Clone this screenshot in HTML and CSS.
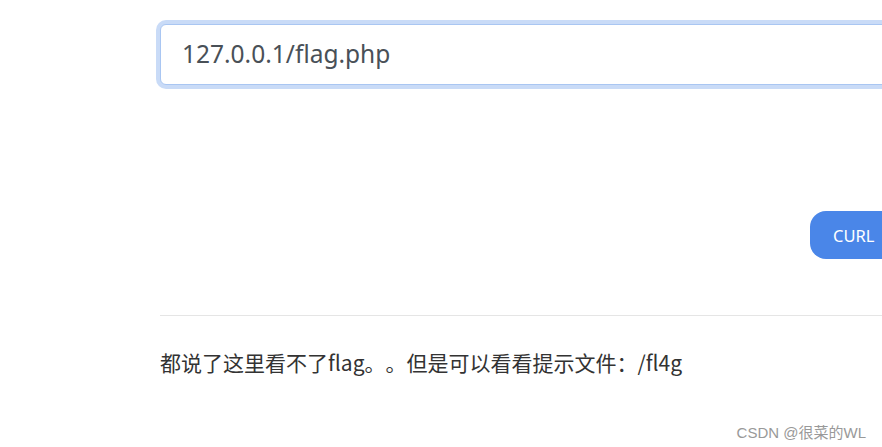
FILE: index.html
```html
<!DOCTYPE html>
<html lang="zh">
<head>
<meta charset="utf-8">
<link rel="stylesheet" href="styles.css">
</head>
<body>
<div class="page">
  <div class="container">
    <form class="form">
      <input class="url-input" type="text" value="127.0.0.1/flag.php">
      <div class="actions">
        <button class="btn" type="button">CURL</button>
      </div>
    </form>
    <hr class="divider">
    <p class="result">都说了这里看不了flag。。但是可以看看提示文件：/fl4g</p>
  </div>
  <div class="watermark">CSDN @很菜的WL</div>
</div>
</body>
</html>
```

FILE: styles.css
```css
html, body {
  margin: 0;
  padding: 0;
  background: #fff;
  overflow: hidden;
}
body {
  width: 882px;
  height: 447px;
  font-family: "Noto Sans", "Noto Sans CJK SC", sans-serif;
  color: #212529;
}
.page {
  position: relative;
  width: 882px;
  height: 447px;
  overflow: hidden;
}
.container {
  padding-left: 160px;
  padding-top: 24px;
  width: 900px;
}
.form {
  margin: 0;
  display: flex;
  flex-direction: column;
}
.url-input {
  box-sizing: border-box;
  width: 760px;
  height: 61px;
  padding: 0 21px 2px;
  border: 1px solid #a9c6f2;
  border-radius: 6px;
  box-shadow: 0 0 0 4px #c9dbf7;
  outline: none;
  font-family: "Noto Sans", "Noto Sans CJK SC", sans-serif;
  font-size: 24.5px;
  color: #495057;
  background: #fff;
}
.actions {
  display: flex;
  padding-top: 126px;
  padding-left: 650px;
}
.btn {
  height: 48px;
  width: 120px;
  padding: 0 0 0 23px;
  text-align: left;
  border: none;
  border-radius: 16px;
  background: #4a86e8;
  color: #fff;
  font-family: "Noto Sans", "Noto Sans CJK SC", sans-serif;
  font-size: 16.5px;
}
.divider {
  margin: 56px 0 0 0;
  border: none;
  border-top: 1px solid #e5e5e5;
  height: 0;
}
.result {
  margin: 31px 0 0 0;
  font-size: 21px;
  line-height: 30px;
  color: #333;
  font-family: "Noto Sans CJK SC", sans-serif;
  text-spacing-trim: space-all;
}
.watermark {
  position: absolute;
  right: 16px;
  top: 421px;
  font-family: "Liberation Sans", "Noto Sans CJK SC", sans-serif;
  font-size: 15px;
  color: #999;
}
```
